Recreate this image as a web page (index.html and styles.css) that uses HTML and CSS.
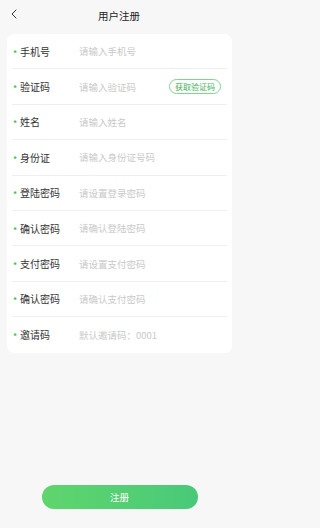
FILE: index.html
```html
<!DOCTYPE html>
<html lang="zh">
<head>
<meta charset="utf-8">
<link rel="stylesheet" href="styles.css">
</head>
<body>
<header class="nav">
  <span class="back"><svg width="6" height="10" viewBox="0 0 6 10"><path d="M5 1 L1 5 L5 9" fill="none" stroke="#333" stroke-width="1" stroke-linecap="round" stroke-linejoin="round"/></svg></span>
  <h1 class="title">用户注册</h1>
</header>
<main class="card">
  <div class="row"><span class="req">*</span><span class="label">手机号</span><span class="ph">请输入手机号</span></div>
  <div class="row"><span class="req">*</span><span class="label">验证码</span><span class="ph">请输入验证码</span><span class="code-btn">获取验证码</span></div>
  <div class="row"><span class="req">*</span><span class="label">姓名</span><span class="ph">请输入姓名</span></div>
  <div class="row"><span class="req">*</span><span class="label">身份证</span><span class="ph">请输入身份证号码</span></div>
  <div class="row"><span class="req">*</span><span class="label">登陆密码</span><span class="ph">请设置登录密码</span></div>
  <div class="row"><span class="req">*</span><span class="label">确认密码</span><span class="ph">请确认登陆密码</span></div>
  <div class="row"><span class="req">*</span><span class="label">支付密码</span><span class="ph">请设置支付密码</span></div>
  <div class="row"><span class="req">*</span><span class="label">确认密码</span><span class="ph">请确认支付密码</span></div>
  <div class="row"><span class="req">*</span><span class="label">邀请码</span><span class="ph">默认邀请码：0001</span></div>
</main>
<div class="actions"><button class="submit">注册</button></div>
</body>
</html>
```
FILE: styles.css
```css
* { box-sizing: border-box; }
html, body { margin: 0; padding: 0; }
body {
  width: 238px;
  min-height: 528px;
  background: #f7f7f7;
  font-family: "Noto Sans CJK SC", "Noto Sans", sans-serif;
  color: #333;
}
.nav {
  height: 30px;
  display: flex;
  align-items: center;
  justify-content: center;
  position: relative;
}
.back {
  position: absolute;
  left: 11px;
  top: 9px;
  display: flex;
}
.title {
  margin: 0;
  font-size: 10.5px;
  font-weight: 400;
  color: #222;
}
.card {
  margin: 4px 6px 0 7px;
  background: #fff;
  border-radius: 7px;
  padding: 0 5px;
}
.row {
  height: 35.4px;
  display: flex;
  align-items: center;
  border-bottom: 1px solid #efefef;
  padding: 0 6px 0 1px;
}
.row:last-child { border-bottom: none; }
.req {
  color: #3fbf5f;
  font-size: 8px;
  font-weight: 700;
  width: 7px;
  line-height: 1;
  padding-top: 3px;
}
.label {
  width: 59px;
  font-size: 10px;
  color: #333;
}
.ph {
  flex: 1;
  font-size: 9.5px;
  color: #c9c9c9;
  white-space: nowrap;
}
.code-btn {
  border: 1px solid #7fd48f;
  border-radius: 8px;
  height: 15px;
  padding: 0 5px;
  font-size: 8px;
  line-height: 13px;
  color: #3fb257;
}
.actions {
  display: flex;
  justify-content: center;
  margin-top: 132px;
}
.submit {
  width: 156px;
  height: 24px;
  border: none;
  border-radius: 12px;
  background: linear-gradient(90deg, #5fd56d, #49c979);
  color: #fff;
  font-family: inherit;
  font-size: 9.5px;
  padding: 0;
  margin-left: 1px;
}
```
